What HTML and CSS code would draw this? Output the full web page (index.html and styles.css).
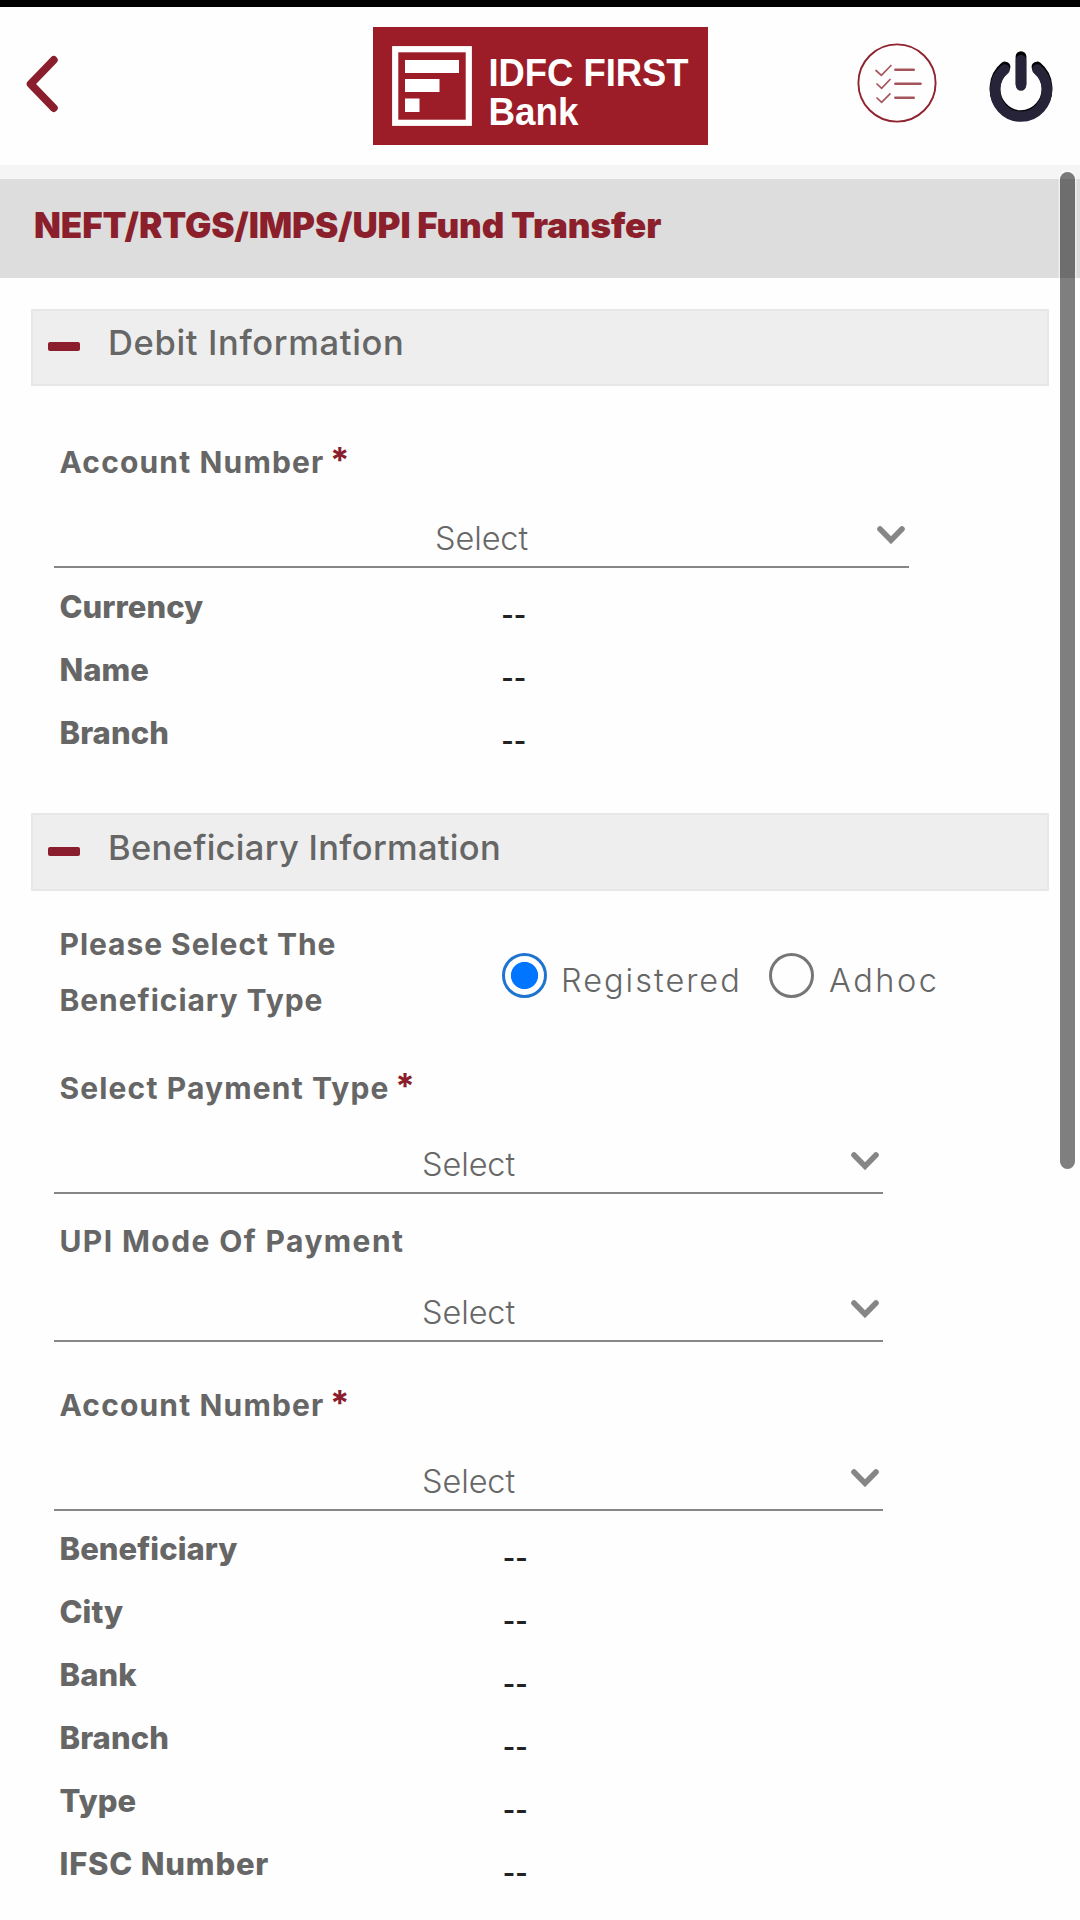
FILE: index.html
```html
<!DOCTYPE html>
<html lang="en">
<head>
<meta charset="utf-8">
<title>Fund Transfer</title>
<link rel="stylesheet" href="styles.css">
</head>
<body>
<svg width="0" height="0" class="defs">
  <symbol id="chevron" viewBox="0 0 28 18"><path d="M3 3 L14 14.2 L25 3" fill="none" stroke="#868686" stroke-width="5.6" stroke-linecap="round"/></symbol>
</svg>

<header class="topbar">
  <svg class="back" viewBox="0 0 36 60" role="img" aria-label="Back"><path d="M30.8 6 L7.6 30 L30.8 54" fill="none" stroke="#8b1e2d" stroke-width="7.8" stroke-linecap="round" stroke-linejoin="round"/></svg>
  <svg class="logo" viewBox="0 0 335 118">
    <rect width="335" height="118" fill="#9c1c28"/>
    <rect x="22.2" y="22.2" width="73.6" height="73.6" fill="none" stroke="#fff" stroke-width="6.2"/>
    <path d="M32 33h54v13H32zM32 52h34.5v13H32zM32 71.5h14.5v13.5H32z" fill="#fff"/>
    <text class="logo-text" x="115.5" y="59" textLength="200" lengthAdjust="spacingAndGlyphs">IDFC FIRST</text>
    <text class="logo-text" x="115.5" y="98" textLength="90" lengthAdjust="spacingAndGlyphs">Bank</text>
  </svg>
  <div class="actions">
    <svg class="tasks" viewBox="0 0 80 80" role="img" aria-label="Tasks">
      <circle cx="40" cy="40" r="38.6" fill="none" stroke="#8f2430" stroke-width="1.9"/>
      <g fill="none" stroke="#a5545b" stroke-linecap="round">
        <path stroke-width="2.4" d="M38.3 26.8h18.5M38.3 40.8h25.3M38.3 54.8h18.5"/>
        <path stroke-width="1.7" d="M19 27.5l5.4 4.8 9.6-9.8M20 41l4.6 4.4 8.4-8.9M20 55l4.6 4.4 8.4-8.6"/>
      </g>
    </svg>
    <svg class="power" viewBox="0 0 64 74" role="img" aria-label="Log out">
      <g fill="none" stroke="#000" stroke-width="10.8" stroke-linecap="round"><path d="M16 17 A26 27.2 0 1 0 48 17M32 6.6V34"/></g>
      <g fill="none" stroke="#27243a" stroke-width="10.4" stroke-linecap="round"><path d="M15.6 19.4 A26 26.6 0 1 0 48.4 19.4M32 10V35.6"/></g>
    </svg>
  </div>
</header>

<h1 class="page-title">NEFT/RTGS/IMPS/UPI Fund Transfer</h1>

<main>
  <section>
    <h2 class="section-head debit"><span class="minus"></span>Debit Information</h2>
    <div class="fields debit-fields">
      <div class="label">Account Number<span class="req">*</span></div>
      <div class="select"><span>Select</span><svg class="chev"><use href="#chevron"/></svg></div>
      <dl class="details">
        <dt>Currency</dt><dd>--</dd>
        <dt>Name</dt><dd>--</dd>
        <dt>Branch</dt><dd>--</dd>
      </dl>
    </div>
  </section>

  <section>
    <h2 class="section-head beneficiary"><span class="minus"></span>Beneficiary Information</h2>
    <div class="fields beneficiary-fields">
      <div class="type-row">
        <div class="label type-label">Please Select The<br>Beneficiary Type</div>
        <div class="radios">
          <span class="radio checked"></span><span class="radio-text">Registered</span>
          <span class="radio"></span><span class="radio-text adhoc">Adhoc</span>
        </div>
      </div>
      <div class="label payment-label">Select Payment Type<span class="req">*</span></div>
      <div class="select"><span>Select</span><svg class="chev"><use href="#chevron"/></svg></div>
      <div class="label upi-label">UPI Mode Of Payment</div>
      <div class="select short"><span>Select</span><svg class="chev"><use href="#chevron"/></svg></div>
      <div class="label account-label">Account Number<span class="req">*</span></div>
      <div class="select"><span>Select</span><svg class="chev"><use href="#chevron"/></svg></div>
      <dl class="details">
        <dt>Beneficiary</dt><dd>--</dd>
        <dt>City</dt><dd>--</dd>
        <dt>Bank</dt><dd>--</dd>
        <dt>Branch</dt><dd>--</dd>
        <dt>Type</dt><dd>--</dd>
        <dt class="ifsc">IFSC Number</dt><dd>--</dd>
      </dl>
    </div>
  </section>
</main>
<div class="scrollbar"></div>
</body>
</html>
```

FILE: styles.css
```css
* { box-sizing: border-box; }
body {
  margin: 0;
  width: 1080px;
  height: 1920px;
  overflow: hidden;
  position: relative;
  background: #fefefe;
  color: #666;
  font-family: Inter, "Liberation Sans", sans-serif;
}
h1, h2, dl, dd { margin: 0; }
.defs { position: absolute; }

.topbar {
  display: grid;
  grid-template-columns: 1fr 335px 1fr;
  align-items: start;
  height: 179px;
  border-top: 7px solid #000;
  border-bottom: 14px solid #f5f5f5;
  background: #fefefe;
}
.back { width: 36px; height: 60px; margin: 47px 0 0 23px; }
.logo { width: 335px; height: 118px; margin-top: 20px; }
.logo-text { font: bold 38px "Liberation Sans", sans-serif; fill: #fff; }
.actions { display: flex; justify-content: flex-end; padding-right: 27.5px; gap: 51.5px; }
.tasks { width: 80px; height: 80px; margin-top: 36px; }
.power { width: 64px; height: 74px; margin-top: 43px; }

.page-title {
  height: 99px;
  padding-left: 34px;
  background: #ddd;
  color: #8c1f2c;
  font-size: 35px;
  font-weight: 900;
  letter-spacing: -0.12px;
  line-height: 93px;
}

.section-head {
  display: flex;
  align-items: flex-start;
  margin: 0 31px;
  padding-left: 15px;
  background: #eee;
  border: 2px solid #e7e7e7;
  font-size: 34.5px;
  font-weight: 500;
}
.debit { height: 77px; margin-top: 31px; line-height: 63px; letter-spacing: 0.65px; }
.beneficiary { height: 78px; margin-top: 49px; line-height: 65px; letter-spacing: 0.3px; }
.minus { width: 32px; height: 9px; margin: 31px 28px 0 0; border-radius: 2px; background: #8b1e2d; }
.beneficiary .minus { margin-top: 32px; }

.fields { margin-left: 54px; }
.debit-fields { width: 855px; padding-top: 48px; }
.beneficiary-fields { width: 829px; padding-top: 25px; }

.label {
  padding-left: 5.5px;
  font-size: 30px;
  font-weight: 700;
  letter-spacing: 1.15px;
  line-height: 56px;
  white-space: nowrap;
}
.req { margin-left: 5.5px; color: #8b1e2d; font-size: 35px; line-height: 1; }
.payment-label { margin-top: 32px; }
.upi-label { margin-top: 19px; letter-spacing: 1.4px; }
.account-label { margin-top: 35px; }

.select {
  display: grid;
  grid-template-columns: 32px 1fr 32px;
  align-items: end;
  height: 78px;
  border-bottom: 2px solid #868686;
  color: #686868;
  font-size: 32.5px;
  font-weight: 300;
  letter-spacing: -0.1px;
  line-height: 54px;
  text-align: center;
}
.select span { grid-column: 2; }
.short { height: 73px; }
.chev { width: 28px; height: 18px; margin-bottom: 22.5px; }

.details {
  display: grid;
  grid-template-columns: 447.5px 1fr;
  grid-auto-rows: 63px;
  margin-top: 7px;
}
.details dt {
  padding-left: 5.5px;
  font-size: 31px;
  font-weight: 800;
  letter-spacing: 0.05px;
  line-height: 63px;
}
.details .ifsc { letter-spacing: 0.8px; }
.details dd {
  color: #222;
  font: 36px/77px "Liberation Sans", sans-serif;
  letter-spacing: 0.6px;
}
.beneficiary-fields .details { margin-top: 6px; grid-template-columns: 449px 1fr; }
.beneficiary-fields dd { line-height: 79px; }

.type-row { display: flex; }
.type-label { flex: none; width: 447.5px; letter-spacing: 0.95px; }
.radios { display: flex; flex: none; padding-top: 37px; }
.radio {
  flex: none;
  width: 45px;
  height: 45px;
  border: 3px solid #767676;
  border-radius: 50%;
}
.checked { border-color: #1f74d0; background: radial-gradient(circle, #0075ff 13.2px, #fff 14px); }
.radio-text {
  width: 206px;
  padding-left: 14.5px;
  margin-right: 16px;
  font-size: 32.5px;
  font-weight: 300;
  letter-spacing: 2px;
  line-height: 56px;
  color: #666;
}
.adhoc { width: auto; margin: 0; padding-left: 15.5px; letter-spacing: 2.5px; }

/* Overlay scroll thumb */
.scrollbar {
  position: absolute;
  top: 172px;
  right: 5px;
  width: 15px;
  height: 997px;
  border-radius: 8px;
  background: rgba(0, 0, 0, 0.5);
  box-shadow: 0 0 0 1.5px rgba(255, 255, 255, 0.5);
}
```
